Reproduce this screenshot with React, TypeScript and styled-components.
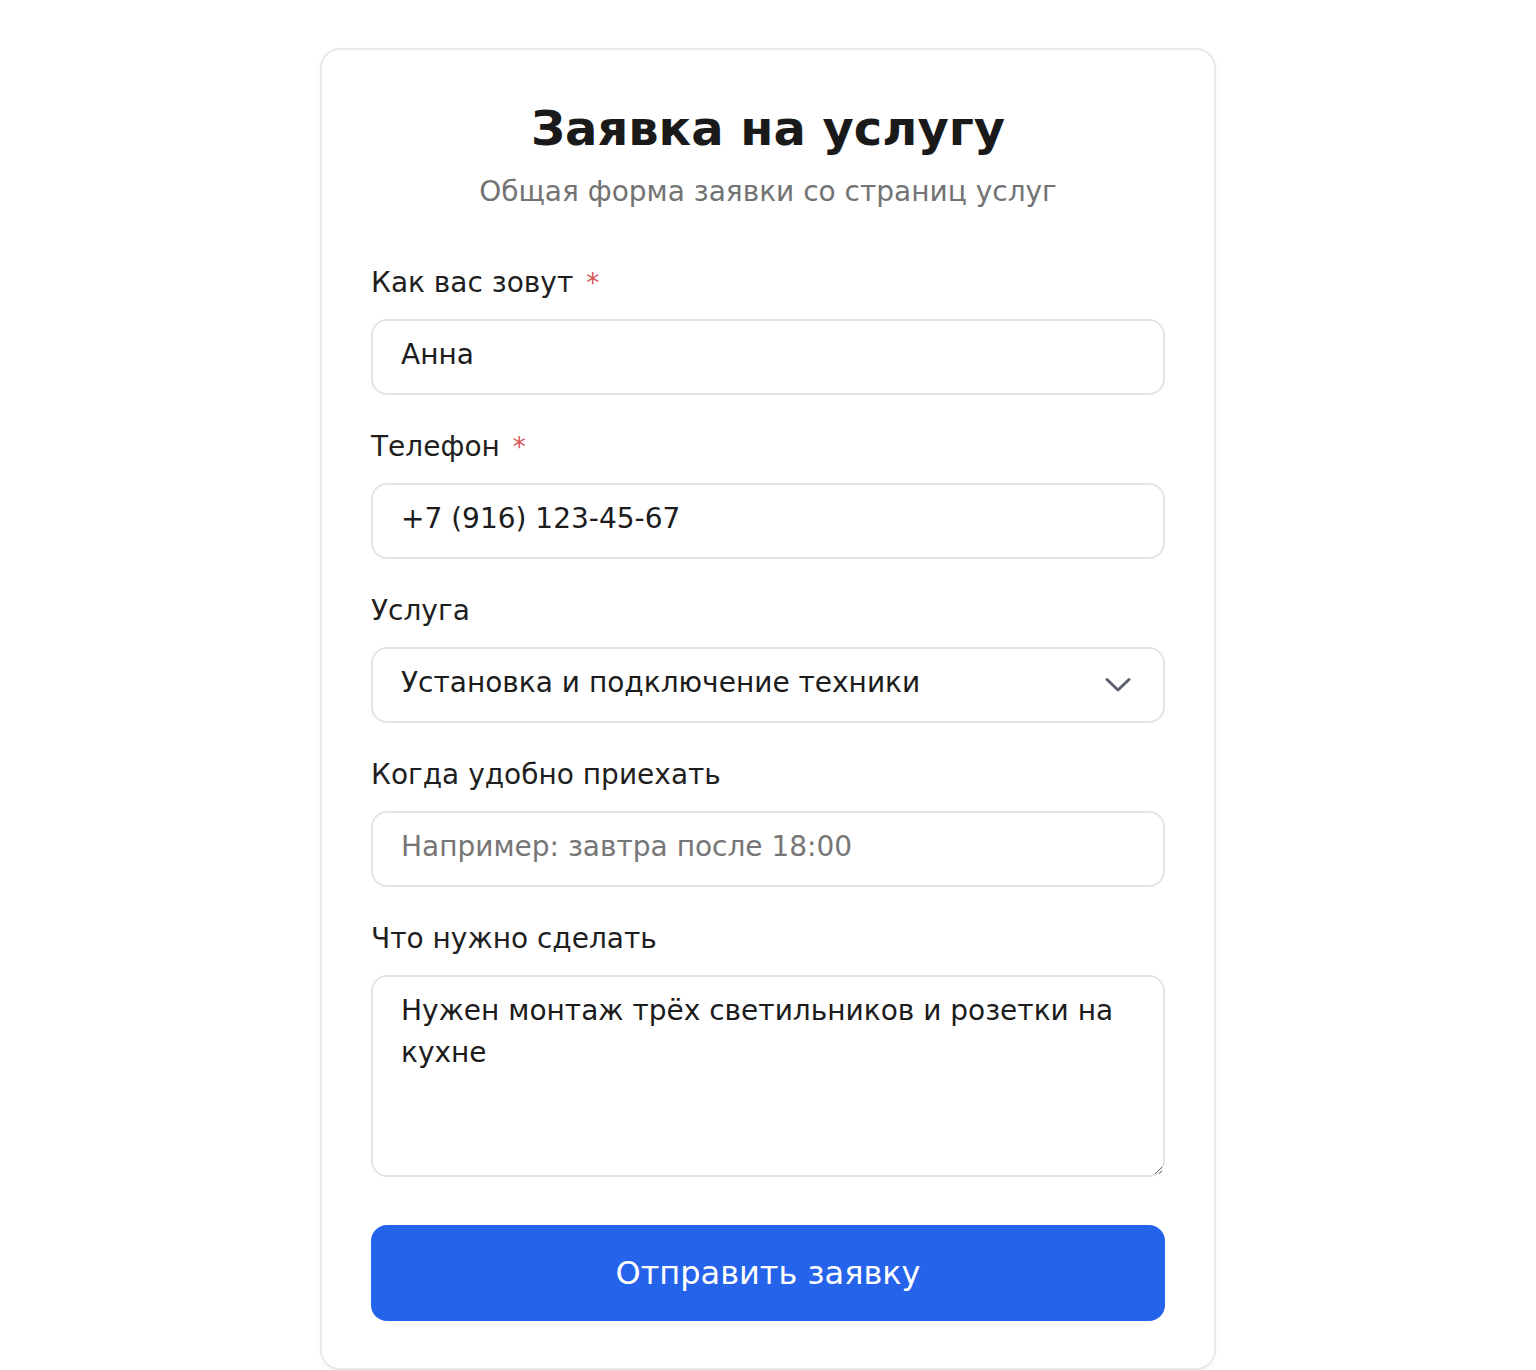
import styled, { createGlobalStyle } from "styled-components";

const GlobalStyle = createGlobalStyle`
  html, body {
    margin: 0;
    padding: 0;
    background: #ffffff;
  }
  body {
    font-family: "DejaVu Sans", "Noto Sans", sans-serif;
    color: #1c1c1c;
  }
  * {
    box-sizing: border-box;
  }
`;

const S_Page = styled.main`
  display: flex;
  justify-content: center;
  padding: 48px 0 0;
`;

const S_Card = styled.form`
  width: 896px;
  background: #ffffff;
  border: 2px solid #e9e9e9;
  border-radius: 20px;
  padding: 48px 49px 47px;
  box-shadow: 0 2px 6px rgba(0, 0, 0, 0.03);
  display: flex;
  flex-direction: column;
`;

const S_Header = styled.div`
  text-align: center;
  margin-bottom: 51px;
`;

const S_Title = styled.h1`
  margin: 0;
  font-size: 48px;
  line-height: 60px;
  font-weight: 700;
  color: #1a1a1a;
`;

const S_Subtitle = styled.p`
  margin: 14px 0 0;
  font-size: 28px;
  line-height: 40px;
  color: #737373;
`;

const S_Fields = styled.div`
  display: flex;
  flex-direction: column;
  gap: 32px;
`;

const S_Field = styled.label`
  display: flex;
  flex-direction: column;
  gap: 16px;
`;

const S_Label = styled.span`
  font-size: 28px;
  line-height: 40px;
  color: #1f1f1f;
`;

const S_Required = styled.span`
  color: #d9534f;
  margin-left: 13px;
  font-size: 26px;
`;

const control = `
  width: 100%;
  border: 2px solid #e4e4e4;
  border-radius: 16px;
  background: #ffffff;
  font-family: "DejaVu Sans", "Noto Sans", sans-serif;
  font-size: 28px;
  color: #1c1c1c;
  outline: none;
  &::placeholder {
    color: #767676;
  }
`;

const S_Input = styled.input`
  ${control}
  height: 76px;
  padding: 0 28px 5px;
`;

const S_SelectWrap = styled.div`
  position: relative;
`;

const S_Select = styled.select`
  ${control}
  height: 76px;
  padding: 0 80px 5px 28px;
  appearance: none;
`;

const S_Chevron = styled.svg`
  position: absolute;
  right: 34px;
  top: 50%;
  transform: translateY(-50%);
  pointer-events: none;
`;

const S_Textarea = styled.textarea`
  ${control}
  height: 202px;
  padding: 13px 28px;
  line-height: 42px;
  resize: vertical;
`;

const S_Submit = styled.button`
  margin-top: 48px;
  height: 96px;
  border: none;
  border-radius: 16px;
  background: #2563eb;
  color: #ffffff;
  font-family: "DejaVu Sans", "Noto Sans", sans-serif;
  font-size: 32px;
  cursor: pointer;
`;

const App = () => {
  return (
    <>
      <GlobalStyle />
      <S_Page>
        <S_Card onSubmit={(e) => e.preventDefault()}>
          <S_Header>
            <S_Title>Заявка на услугу</S_Title>
            <S_Subtitle>Общая форма заявки со страниц услуг</S_Subtitle>
          </S_Header>
          <S_Fields>
            <S_Field>
              <S_Label>
                Как вас зовут<S_Required>*</S_Required>
              </S_Label>
              <S_Input defaultValue="Анна" />
            </S_Field>
            <S_Field>
              <S_Label>
                Телефон<S_Required>*</S_Required>
              </S_Label>
              <S_Input type="tel" defaultValue="+7 (916) 123-45-67" />
            </S_Field>
            <S_Field>
              <S_Label>Услуга</S_Label>
              <S_SelectWrap>
                <S_Select defaultValue="install">
                  <option value="install">Установка и подключение техники</option>
                  <option value="repair">Ремонт</option>
                  <option value="electric">Электромонтаж</option>
                </S_Select>
                <S_Chevron width="26" height="16" viewBox="0 0 26 16" fill="none">
                  <path
                    d="M2 2.5L13 13L24 2.5"
                    stroke="#5f6370"
                    strokeWidth="3"
                    strokeLinecap="round"
                    strokeLinejoin="round"
                  />
                </S_Chevron>
              </S_SelectWrap>
            </S_Field>
            <S_Field>
              <S_Label>Когда удобно приехать</S_Label>
              <S_Input placeholder="Например: завтра после 18:00" />
            </S_Field>
            <S_Field>
              <S_Label>Что нужно сделать</S_Label>
              <S_Textarea defaultValue="Нужен монтаж трёх светильников и розетки на кухне" />
            </S_Field>
          </S_Fields>
          <S_Submit type="submit">Отправить заявку</S_Submit>
        </S_Card>
      </S_Page>
    </>
  );
};

export default App;
